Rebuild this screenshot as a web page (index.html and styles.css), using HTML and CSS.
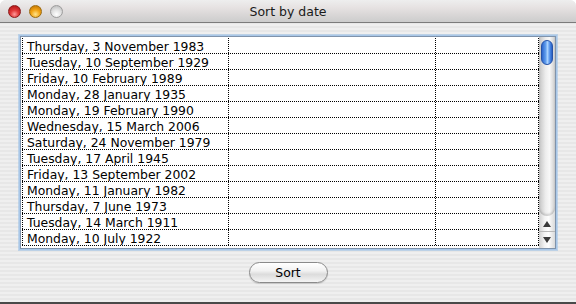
FILE: index.html
```html
<!DOCTYPE html>
<html lang="en">
<head>
    <meta charset="UTF-8">
    <title>Sort by date</title>
    <link rel="stylesheet" href="styles.css">
</head>
<body>
    <div class="window">
        <div class="titlebar">
            <div class="lights">
                <span class="light close"></span>
                <span class="light minimize"></span>
                <span class="light zoom"></span>
            </div>
            <div class="title">Sort by date</div>
            <div></div>
        </div>
        <div class="content">
            <div class="table-frame">
                <div class="table">
                    <div class="row"><div class="cell">Thursday, 3 November 1983</div><div class="cell"></div><div class="cell"></div></div>
                    <div class="row"><div class="cell">Tuesday, 10 September 1929</div><div class="cell"></div><div class="cell"></div></div>
                    <div class="row"><div class="cell">Friday, 10 February 1989</div><div class="cell"></div><div class="cell"></div></div>
                    <div class="row"><div class="cell">Monday, 28 January 1935</div><div class="cell"></div><div class="cell"></div></div>
                    <div class="row"><div class="cell">Monday, 19 February 1990</div><div class="cell"></div><div class="cell"></div></div>
                    <div class="row"><div class="cell">Wednesday, 15 March 2006</div><div class="cell"></div><div class="cell"></div></div>
                    <div class="row"><div class="cell">Saturday, 24 November 1979</div><div class="cell"></div><div class="cell"></div></div>
                    <div class="row"><div class="cell">Tuesday, 17 April 1945</div><div class="cell"></div><div class="cell"></div></div>
                    <div class="row"><div class="cell">Friday, 13 September 2002</div><div class="cell"></div><div class="cell"></div></div>
                    <div class="row"><div class="cell">Monday, 11 January 1982</div><div class="cell"></div><div class="cell"></div></div>
                    <div class="row"><div class="cell">Thursday, 7 June 1973</div><div class="cell"></div><div class="cell"></div></div>
                    <div class="row"><div class="cell">Tuesday, 14 March 1911</div><div class="cell"></div><div class="cell"></div></div>
                    <div class="row"><div class="cell">Monday, 10 July 1922</div><div class="cell"></div><div class="cell"></div></div>
                </div>
                <div class="scrollbar">
                    <div class="track"><div class="thumb"></div></div>
                    <div class="arrow up"></div>
                    <div class="arrow down"></div>
                </div>
            </div>
            <div class="actions">
                <button class="button">Sort</button>
            </div>
        </div>
    </div>
</body>
</html>
```

FILE: styles.css
```css
body {
    margin: 0;
    padding: 0;
    background-color: #ffffff;
    font-family: 'DejaVu Sans', 'Liberation Sans', sans-serif;
    color: #000;
}
.window {
    box-sizing: border-box;
    width: 576px;
    height: 304px;
    border-radius: 6px 6px 0 0;
    overflow: hidden;
    border-bottom: 2px solid #4a4a4a;
    background: repeating-linear-gradient(#efefef 0 2px, #e7e7e7 2px 4px);
}
.titlebar {
    height: 22px;
    display: grid;
    grid-template-columns: 1fr auto 1fr;
    align-items: center;
    background: linear-gradient(#eeeeee, #e6e2e2 35%, #dcd9d9 60%, #cccccc);
    border-bottom: 1px solid #7b7b7b;
}
.lights {
    display: flex;
    gap: 8px;
    padding: 1px 0 0 8px;
}
.light {
    width: 13px;
    height: 13px;
    border-radius: 50%;
    box-sizing: border-box;
}
.close {
    background: radial-gradient(circle at 50% 75%, #ff9a9a 0, #e23a3a 40%, #a80d0d 100%);
    border: 1px solid #8a1a1a;
}
.minimize {
    background: radial-gradient(circle at 50% 75%, #ffe48a 0, #f2a414 45%, #b86a00 100%);
    border: 1px solid #9a6a10;
}
.zoom {
    background: radial-gradient(circle at 50% 75%, #ffffff 0, #e2e2e2 45%, #b4b4b4 100%);
    border: 1px solid #9c9c9c;
}
.title {
    font-size: 12.5px;
    color: #1a1a1a;
    padding-top: 1px;
}
.content {
    padding: 13px 21px 0 20px;
}
.table-frame {
    display: flex;
    width: 536px;
    box-sizing: border-box;
    border: 1px solid #7f93ab;
    box-shadow: 0 0 0 1px #a9c7e8, 0 0 0 2px rgba(160, 195, 230, 0.6);
    background-color: #fff;
}
.table {
    width: 518px;
    padding: 1px 0 2px 1px;
    box-sizing: border-box;
}
.row {
    display: flex;
    height: 16px;
    box-sizing: border-box;
    border-bottom: 1px dotted #000;
}
.cell {
    height: 15px;
    line-height: 17px;
    font-size: 12.4px;
    padding-left: 4px;
    box-sizing: border-box;
    border-right: 1px dotted #000;
    white-space: nowrap;
    overflow: hidden;
}
.cell:nth-child(1) { width: 207px; border-left: 1px dotted #000; }
.cell:nth-child(2) { width: 207px; }
.cell:nth-child(3) { width: 103px; }
.scrollbar {
    width: 16px;
    display: flex;
    flex-direction: column;
    background: linear-gradient(to right, #d0d0d0, #f3f3f3 35%, #fdfdfd 60%, #d9d9d9);
}
.track {
    height: 179px;
    border-radius: 0 0 8px 8px;
    background: linear-gradient(to right, #c4c4c4, #ececec 40%, #f8f8f8 65%, #cfcfcf);
    box-shadow: inset 0 -2px 2px rgba(0, 0, 0, 0.15);
}
.thumb {
    width: 12px;
    height: 25px;
    margin: 3px 0 0 2px;
    box-sizing: border-box;
    border-radius: 6px;
    border: 1px solid #2552a8;
    background: linear-gradient(to right, #2d66cc, #5f9cec 35%, #a9d2ff 55%, #4b8ae6 80%, #2a5fc2);
}
.arrow {
    height: 16px;
    display: flex;
    align-items: center;
    justify-content: center;
}
.arrow::after {
    content: "";
    width: 0;
    height: 0;
    border-left: 4px solid transparent;
    border-right: 4px solid transparent;
}
.up {
    border-bottom: 1px solid #b8b8b8;
    box-sizing: border-box;
}
.up::after {
    border-bottom: 6px solid #3a3a3a;
}
.down::after {
    border-top: 6px solid #3a3a3a;
}
.actions {
    display: flex;
    justify-content: center;
    margin-top: 13px;
    padding-left: 1px;
}
.button {
    width: 79px;
    height: 21px;
    border: 1px solid #8a8a8a;
    border-radius: 11px;
    font-family: 'DejaVu Sans', sans-serif;
    font-size: 12.4px;
    color: #000;
    padding: 0;
    background: linear-gradient(#ffffff, #f2f2f2 40%, #dcdcdc 60%, #f4f4f4);
    box-shadow: 0 1px 1px rgba(0, 0, 0, 0.15);
}
```
